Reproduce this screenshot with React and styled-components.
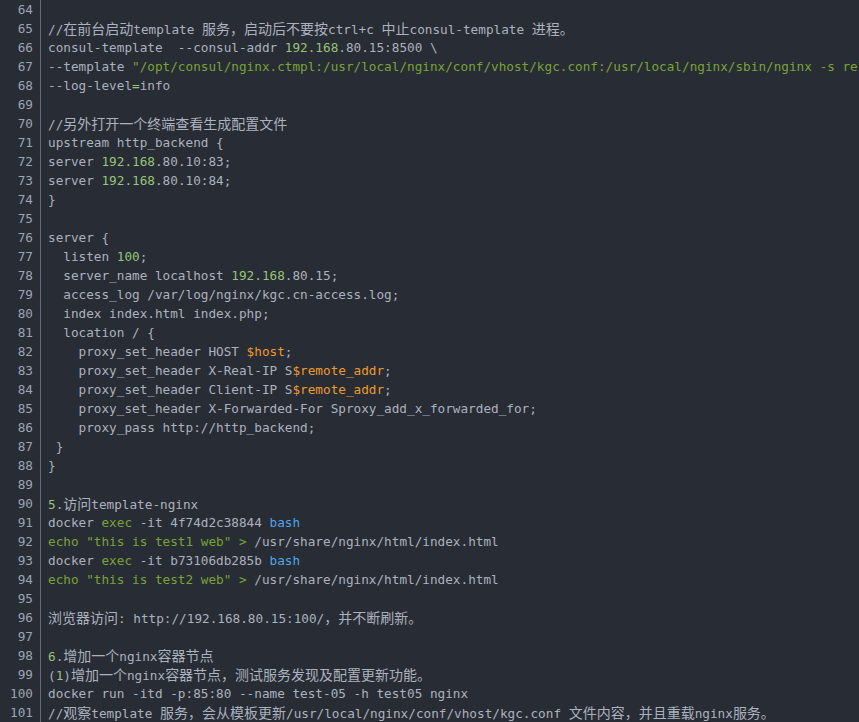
import React from "react";
import styled, { createGlobalStyle } from "styled-components";

const GlobalStyle = createGlobalStyle`
  html, body {
    margin: 0;
    padding: 0;
    background: #282c34;
  }
`;

const Editor = styled.div`
  width: 859px;
  height: 722px;
  overflow: hidden;
  background: #282c34;
  font-family: "DejaVu Sans Mono", "Liberation Mono", "Noto Sans CJK SC", monospace;
  font-size: 12.7px;
  color: #abb2bf;
`;

const Row = styled.div`
  display: flex;
  height: 19px;
  line-height: 19px;
`;

const LineNo = styled.div`
  flex: 0 0 33px;
  padding-right: 7px;
  text-align: right;
  color: #9da5b4;
  border-right: 1px solid #636a76;
`;

const Code = styled.div`
  flex: 1;
  padding-left: 7px;
  white-space: pre;
  overflow: hidden;
`;

const Tok = styled.span`
  color: ${(p) =>
    p.$k === "n" ? "#98c379" :
    p.$k === "s" ? "#7aa337" :
    p.$k === "b" ? "#4fa6ea" :
    p.$k === "v" ? "#ee9a2c" :
    "#abb2bf"};
`;

const Cjk = styled.span`
  font-family: "Noto Sans CJK SC", sans-serif;
  font-size: 14px;
`;

const lines = [
  [],
  [["//在前台启动template 服务，启动后不要按ctrl+c 中止consul-template 进程。"]],
  [["consul-template  --consul-addr "], ["192.168", "n"], [".80.15:8500 \\"]],
  [["--template "], ["\"/opt/consul/nginx.ctmpl:/usr/local/nginx/conf/vhost/kgc.conf:/usr/local/nginx/sbin/nginx -s reload\"", "s"]],
  [["--log-level"], ["=", "n"], ["info"]],
  [],
  [["//另外打开一个终端查看生成配置文件"]],
  [["upstream http_backend {"]],
  [["server "], ["192.168", "n"], [".80.10:83;"]],
  [["server "], ["192.168", "n"], [".80.10:84;"]],
  [["}"]],
  [],
  [["server {"]],
  [["  listen "], ["100", "n"], [";"]],
  [["  server_name localhost "], ["192.168", "n"], [".80.15;"]],
  [["  access_log /var/log/nginx/kgc.cn-access.log;"]],
  [["  index index.html index.php;"]],
  [["  location / {"]],
  [["    proxy_set_header HOST "], ["$host", "v"], [";"]],
  [["    proxy_set_header X-Real-IP S"], ["$remote_addr", "v"], [";"]],
  [["    proxy_set_header Client-IP S"], ["$remote_addr", "v"], [";"]],
  [["    proxy_set_header X-Forwarded-For Sproxy_add_x_forwarded_for;"]],
  [["    proxy_pass http://http_backend;"]],
  [[" }"]],
  [["}"]],
  [],
  [["5", "n"], [".访问template-nginx"]],
  [["docker "], ["exec", "s"], [" -it 4f74d2c38844 "], ["bash", "b"]],
  [["echo \"this is test1 web\" >", "s"], [" /usr/share/nginx/html/index.html"]],
  [["docker "], ["exec", "s"], [" -it b73106db285b "], ["bash", "b"]],
  [["echo \"this is test2 web\" >", "s"], [" /usr/share/nginx/html/index.html"]],
  [],
  [["浏览器访问: http://192.168.80.15:100/，并不断刷新。"]],
  [],
  [["6", "n"], [".增加一个nginx容器节点"]],
  [["("], ["1", "n"], [")增加一个nginx容器节点，测试服务发现及配置更新功能。"]],
  [["docker run -itd -p:85:80 --name test-05 -h test05 nginx"]],
  [["//观察template 服务，会从模板更新/usr/local/nginx/conf/vhost/kgc.conf 文件内容，并且重载nginx服务。"]],
];

const cjkRe = /([\u3000-\u303f\u4e00-\u9fff\uff00-\uffef]+)/;

const renderText = (text) =>
  text.split(cjkRe).map((part, i) =>
    i % 2 === 1 ? <Cjk key={i}>{part}</Cjk> : part
  );

const App = () => (
  <>
    <GlobalStyle />
    <Editor>
      {lines.map((toks, i) => (
        <Row key={i}>
          <LineNo>{64 + i}</LineNo>
          <Code>
            {toks.map(([text, kind], j) => (
              <Tok key={j} $k={kind}>
                {renderText(text)}
              </Tok>
            ))}
          </Code>
        </Row>
      ))}
    </Editor>
  </>
);

export default App;
